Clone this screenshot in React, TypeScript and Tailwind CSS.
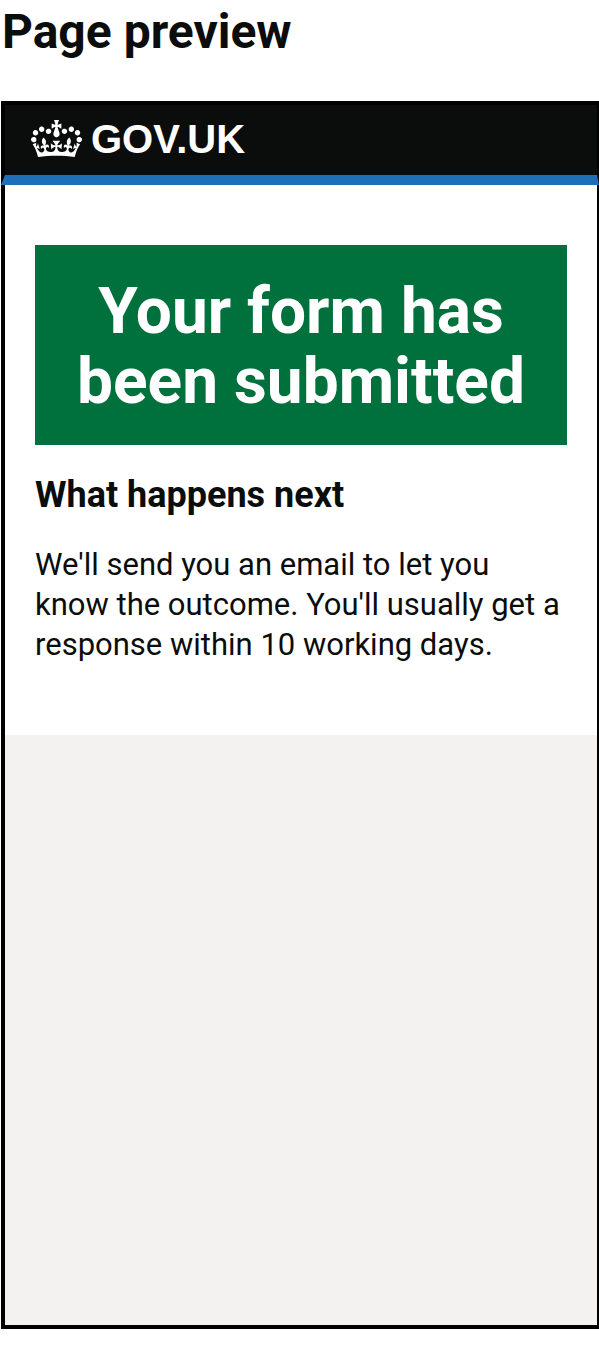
function Crown() {
  return (
    <svg
      aria-hidden="true"
      viewBox="0 0 132 97"
      preserveAspectRatio="xMidYMin meet"
      className="h-[38px] w-[51px] shrink-0 fill-white"
    >
      <path
        fillRule="evenodd"
        d="M25 30.2c3.5 1.5 7.7-.2 9.1-3.7 1.5-3.6-.2-7.8-3.9-9.2-3.6-1.4-7.6.3-9.1 3.9-1.4 3.5.3 7.5 3.9 9zM9 39.5c3.6 1.5 7.8-.2 9.2-3.7 1.5-3.6-.2-7.8-3.9-9.1-3.6-1.5-7.6.2-9.1 3.8-1.4 3.5.3 7.5 3.8 9zM4.4 57.2c3.5 1.5 7.7-.2 9.1-3.8 1.5-3.6-.2-7.7-3.9-9.1-3.5-1.5-7.6.3-9.1 3.8-1.4 3.5.3 7.6 3.9 9.1zm38.3-21.4c3.5 1.5 7.7-.2 9.1-3.8 1.5-3.6-.2-7.7-3.9-9.1-3.6-1.5-7.6.3-9.1 3.8-1.3 3.6.4 7.7 3.9 9.1zm64.4-5.6c-3.6 1.5-7.8-.2-9.1-3.7-1.5-3.6.2-7.8 3.8-9.2 3.6-1.4 7.7.3 9.2 3.9 1.3 3.5-.4 7.5-3.9 9zm15.9 9.3c-3.6 1.5-7.7-.2-9.1-3.7-1.5-3.6.2-7.8 3.7-9.1 3.6-1.5 7.7.2 9.2 3.8 1.5 3.5-.3 7.5-3.8 9zm4.7 17.7c-3.6 1.5-7.8-.2-9.2-3.8-1.5-3.6.2-7.7 3.9-9.1 3.6-1.5 7.7.3 9.2 3.8 1.3 3.5-.4 7.6-3.9 9.1zM89.3 35.8c-3.6 1.5-7.8-.2-9.2-3.8-1.4-3.6.2-7.7 3.9-9.1 3.6-1.5 7.7.3 9.2 3.8 1.4 3.6-.3 7.7-3.9 9.1zM69.7 17.7l8.9 4.7V9.3l-8.9 2.8c-.2-.3-.5-.6-.9-.9L72.4 0H59.6l3.5 11.2c-.3.3-.6.5-.9.9l-8.8-2.8v13.1l8.8-4.7c.3.3.6.7.9.9l-5 15.4v.1c-.2.8-.4 1.6-.4 2.4 0 4.1 3.1 7.5 7 8.1h.2c.3 0 .7.1 1 .1.4 0 .7 0 1-.1h.2c4-.6 7.1-4.1 7.1-8.1 0-.8-.1-1.7-.4-2.4V34l-5.1-15.4c.4-.2.7-.6 1-.9zM66 92.8c16.9 0 32.8 1.1 47.1 3.2 4-16.9 8.9-26.7 14-33.5l-9.6-3.4c1 4.9 1.1 7.2 0 10.2-1.5-1.4-3-4.3-4.2-8.7L108.6 76c2.8-2 5-3.2 7.5-3.3-4.4 9.4-10 11.9-13.6 11.2-4.3-.8-6.3-4.6-5.6-7.9 1-4.7 5.7-5.9 8-.5 4.3-8.7-3-11.4-7.6-8.8 7.1-7.2 7.9-13.5 2.1-21.1-8 6.1-8.1 12.3-4.5 20.8-4.7-5.4-12.1-2.5-9.5 6.2 3.4-5.2 7.9-2 7.2 3.1-.6 4.3-6.4 7.8-13.5 7.2-10.3-.9-10.9-8-11.2-13.8 2.5-.5 7.1 1.8 11 7.3L80.2 60c-4.1 4.4-8 5.3-12.3 5.4 1.4-4.4 8-11.6 8-11.6H55.5s6.4 7.2 7.9 11.6c-4.2-.1-8-1-12.3-5.4l1.4 16.4c3.9-5.5 8.5-7.7 10.9-7.3-.3 5.8-.9 12.8-11.1 13.8-7.2.6-12.9-2.9-13.5-7.2-.7-5 3.8-8.3 7.1-3.1 2.7-8.7-4.6-11.6-9.4-6.2 3.7-8.5 3.6-14.7-4.6-20.8-5.8 7.6-5 13.9 2.2 21.1-4.7-2.6-11.9.1-7.7 8.8 2.3-5.5 7.1-4.2 8.1.5.7 3.3-1.3 7.1-5.7 7.9-3.5.7-9-1.8-13.5-11.2 2.5.1 4.7 1.3 7.5 3.3l-4.7-15.4c-1.2 4.4-2.7 7.2-4.3 8.7-1.1-3-.9-5.3 0-10.2l-9.5 3.4c5 6.9 9.9 16.7 14 33.5 14.8-2.1 30.8-3.2 47.7-3.2z"
      />
    </svg>
  );
}

export default function App() {
  return (
    <div className="min-h-screen bg-white pb-[30px] font-['Roboto',sans-serif] text-[#0b0c0c]">
      <h1 className="px-[2px] pt-1 text-[48px] leading-[56px] font-bold">
        Page preview
      </h1>

      <section aria-label="Page preview" className="mt-[41px] ml-px">
        <header className="flex border-4 border-r-2 border-b-[10px] border-black border-b-[#1d70b8] bg-[#0b0c0c] px-[26px] pt-[14px] pb-4">
          <a
            href="#"
            className="flex h-10 items-center gap-[9px] font-['Liberation_Sans',Arial,sans-serif] text-[40px] leading-10 font-bold text-white"
          >
            <Crown />
            <span>GOV.UK</span>
          </a>
        </header>

        <div className="border-4 border-t-0 border-r-2 border-black bg-[#f3f2f1] pb-[590px]">
          <main className="bg-white px-[30px] pt-[60px] pb-[70px]">
            <div className="bg-[#00703c] px-[35px] pt-8 pb-7 text-center text-white">
              <h2 className="text-[64px] leading-[70px] font-bold">
                Your form has been submitted
              </h2>
            </div>
            <h3 className="mt-[30px] text-[36px] leading-10 font-bold">
              What happens next
            </h3>
            <p className="mt-[30px] text-[31px] leading-10">
              We&apos;ll send you an email to let you know the outcome.
              You&apos;ll usually get a response within 10 working days.
            </p>
          </main>
        </div>
      </section>
    </div>
  );
}
